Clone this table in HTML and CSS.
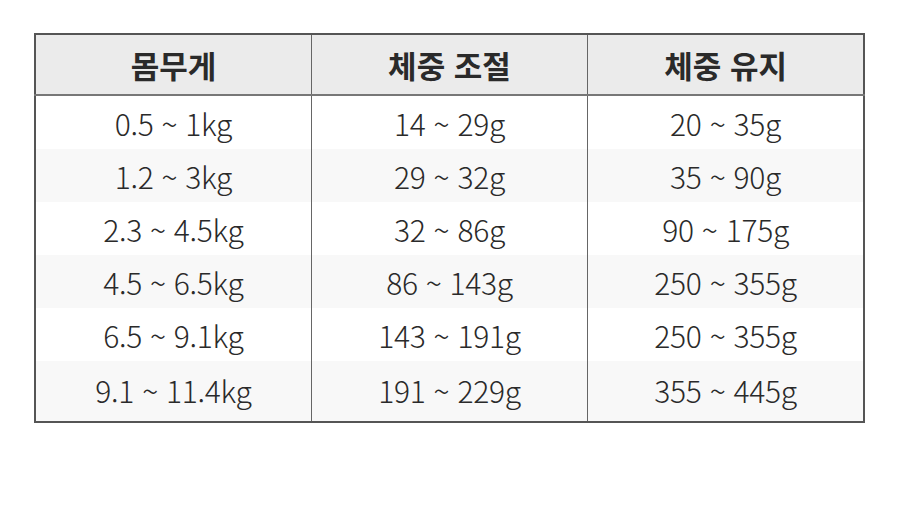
FILE: index.html
```html
<!DOCTYPE html>
<html lang="ko">
<head>
<meta charset="utf-8">
<link rel="stylesheet" href="styles.css">
</head>
<body>
<div class="wrap">
<table class="feed">
<thead>
<tr><th>몸무게</th><th>체중 조절</th><th>체중 유지</th></tr>
</thead>
<tbody>
<tr><td>0.5 ~ 1kg</td><td>14 ~ 29g</td><td>20 ~ 35g</td></tr>
<tr><td>1.2 ~ 3kg</td><td>29 ~ 32g</td><td>35 ~ 90g</td></tr>
<tr><td>2.3 ~ 4.5kg</td><td>32 ~ 86g</td><td>90 ~ 175g</td></tr>
<tr><td>4.5 ~ 6.5kg</td><td>86 ~ 143g</td><td>250 ~ 355g</td></tr>
<tr><td>6.5 ~ 9.1kg</td><td>143 ~ 191g</td><td>250 ~ 355g</td></tr>
<tr class="last"><td>9.1 ~ 11.4kg</td><td>191 ~ 229g</td><td>355 ~ 445g</td></tr>
</tbody>
</table>
</div>
</body>
</html>
```
FILE: styles.css
```css
html, body {
  margin: 0;
  padding: 0;
  background: #ffffff;
}
.wrap {
  padding: 33px 0 0 34px;
}
.feed {
  width: 831px;
  border-collapse: collapse;
  border: 2px solid #555555;
  font-family: "Noto Sans CJK KR", "Noto Sans", sans-serif;
  color: #2a2a2a;
  table-layout: fixed;
}
.feed th {
  height: 59px;
  padding: 0;
  background: #ebebeb;
  font-weight: 600;
  font-size: 31px;
  color: #2a2a2a;
  border-right: 1px solid #666666;
  border-bottom: 2px solid #777777;
  line-height: 1;
}
.feed td {
  height: 53px;
  padding: 0;
  font-size: 30px;
  font-weight: 300;
  text-align: center;
  border-right: 1px solid #666666;
  line-height: 1;
  letter-spacing: -0.3px;
}
.feed th:last-child,
.feed td:last-child {
  border-right: none;
}
.feed tbody tr:nth-child(even) td {
  background: #f8f8f8;
}
.feed tr.last td {
  height: 57px;
  padding-bottom: 3px;
}
```
